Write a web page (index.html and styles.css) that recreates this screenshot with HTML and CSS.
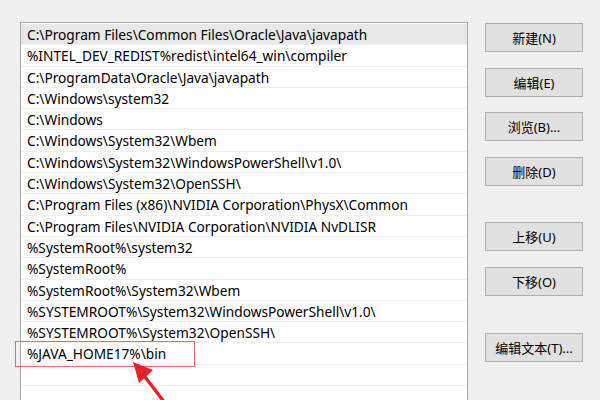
FILE: index.html
```html
<!DOCTYPE html>
<html lang="zh-CN">
<head>
    <meta charset="UTF-8">
    <title>编辑环境变量</title>
    <link rel="stylesheet" href="styles.css">
</head>
<body>
 <div class="main-container">
  <div class="path-list">
   <div class="row selected">C:\Program Files\Common Files\Oracle\Java\javapath</div>
   <div class="row">%INTEL_DEV_REDIST%redist\intel64_win\compiler</div>
   <div class="row">C:\ProgramData\Oracle\Java\javapath</div>
   <div class="row">C:\Windows\system32</div>
   <div class="row">C:\Windows</div>
   <div class="row">C:\Windows\System32\Wbem</div>
   <div class="row">C:\Windows\System32\WindowsPowerShell\v1.0\</div>
   <div class="row">C:\Windows\System32\OpenSSH\</div>
   <div class="row">C:\Program Files (x86)\NVIDIA Corporation\PhysX\Common</div>
   <div class="row">C:\Program Files\NVIDIA Corporation\NVIDIA NvDLISR</div>
   <div class="row">%SystemRoot%\system32</div>
   <div class="row">%SystemRoot%</div>
   <div class="row">%SystemRoot%\System32\Wbem</div>
   <div class="row">%SYSTEMROOT%\System32\WindowsPowerShell\v1.0\</div>
   <div class="row">%SYSTEMROOT%\System32\OpenSSH\</div>
   <div class="row">%JAVA_HOME17%\bin</div>
   <div class="row"></div>
   <div class="row"></div>
  </div>
  <div class="buttons">
   <button class="btn">新建(N)</button>
   <button class="btn">编辑(E)</button>
   <button class="btn">浏览(B)...</button>
   <button class="btn">删除(D)</button>
   <button class="btn gap-top">上移(U)</button>
   <button class="btn">下移(O)</button>
   <button class="btn gap-top-big">编辑文本(T)...</button>
  </div>
 </div>
 <div class="mark-box"></div>
 <svg class="mark-arrow" width="60" height="50" viewBox="0 0 60 50">
  <line x1="9" y1="8" x2="38" y2="46" stroke="#e8222a" stroke-width="3.4"/>
  <polygon points="3,1 23,9 9,22" fill="#e8222a"/>
 </svg>
</body>
</html>
```

FILE: styles.css
```css
body {
    margin: 0;
    background-color: #f0f0f0;
    font-family: "Noto Sans", "Noto Sans CJK SC", sans-serif;
    overflow: hidden;
}
.main-container {
    display: flex;
    flex-direction: row;
    padding-top: 22px;
    padding-left: 20px;
    height: 378px;
}
.path-list {
    width: 446px;
    border: 1px solid #a8a8a8;
    border-bottom: none;
    background-color: #ffffff;
    padding-top: 1px;
}
.row {
    height: 20.3px;
    line-height: 21px;
    border-bottom: 1px solid #f0f0f0;
    padding-left: 6px;
    font-size: 13.7px;
    color: #000;
    white-space: nowrap;
}
.row.selected { background-color: #e8e8e8; }

.buttons {
    display: flex;
    flex-direction: column;
    margin-left: 17px;
    padding-top: 1px;
}
.btn {
    width: 98px;
    height: 29px;
    margin-bottom: 15.5px;
    background-color: #e1e1e1;
    border: 1px solid #adadad;
    font-family: "Noto Sans", "Noto Sans CJK SC", sans-serif;
    font-size: 13px;
    color: #000;
    padding: 0;
}
.gap-top { margin-top: 21px; }
.gap-top-big { margin-top: 22px; }

.mark-box {
    position: absolute;
    left: 15px;
    top: 341px;
    width: 178px;
    height: 24px;
    border: 1px solid #ee6a6e;
}
.mark-arrow {
    position: absolute;
    left: 130px;
    top: 361px;
}
```
